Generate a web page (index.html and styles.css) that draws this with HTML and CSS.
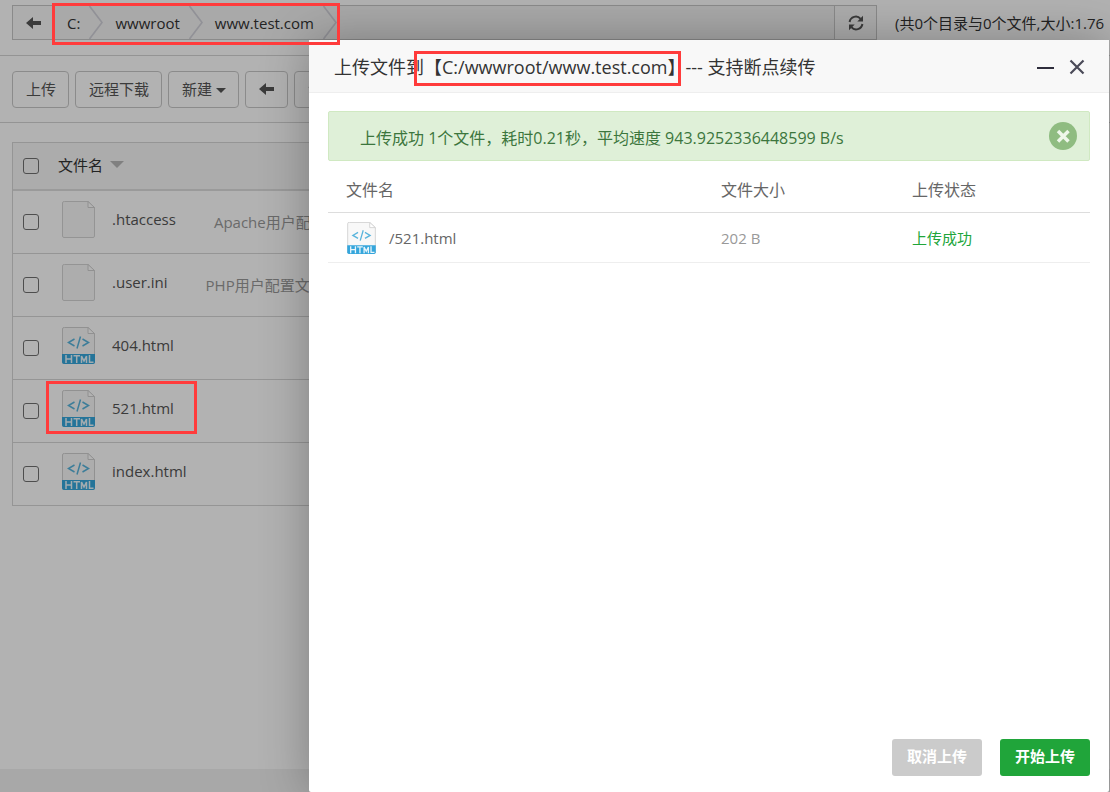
FILE: index.html
```html
<!DOCTYPE html>
<html lang="zh-CN">
<head>
<meta charset="utf-8">
<title>文件管理</title>
<link rel="stylesheet" href="styles.css">
</head>
<body>
<svg class="defs" aria-hidden="true">
  <symbol id="arrow-left" viewBox="0 0 16 12"><path d="M0 6 7 0v4h8v4H7v4z" fill="currentColor"/></symbol>
  <symbol id="refresh" viewBox="0 0 16 16"><g fill="none" stroke="currentColor" stroke-width="2"><path d="M1.600 7A6.300 6.300 0 0 1 12.600 3.800"/><path d="M14.400 9A6.300 6.300 0 0 1 3.400 12.200"/></g><path d="M15 .8V6.500H9.300zM1 15.200V9.500h5.700z" fill="currentColor"/></symbol>
  <symbol id="chevron" viewBox="0 0 14 33"><path d="M.5 0 13 16.500.5 33" fill="none" stroke="currentColor" stroke-width="1.600"/></symbol>
  <symbol id="file-blank" viewBox="0 0 33 37"><path d="M2.500.5H26l6.500 6V35a1.500 1.500 0 0 1-1.500 1.500H2A1.500 1.500 0 0 1 .5 35V2A1.500 1.500 0 0 1 2 .5z" fill="#f8f8f8" stroke="#d4d4d4"/><path d="M26 .5v6h6.500z" fill="#fff" stroke="#d0d0d0"/></symbol>
  <symbol id="file-html" viewBox="0 0 33 37"><path d="M2.500.5H26l6.500 6V35a1.500 1.500 0 0 1-1.500 1.500H2A1.500 1.500 0 0 1 .5 35V2A1.500 1.500 0 0 1 2 .5z" fill="#f8f8f8" stroke="#d0d0d0"/><path d="M26 .5v6h6.500z" fill="#fff" stroke="#d0d0d0"/><g fill="none" stroke="#58b4dc" stroke-width="1.500"><path d="m12.500 12-6 3.500 6 3.500M20.500 12l6 3.500-6 3.500M18.500 9.500l-3.500 12"/></g><path d="M0 27h33v8a2 2 0 0 1-2 2H2a2 2 0 0 1-2-2z" fill="#35a6dc"/><g fill="none" stroke="#e8f5fb" stroke-width="1.500"><path d="M4 28v8M9.500 28v8M4 32h5.500M11.500 28.700h6.500M14.700 28.700V36M19.500 36v-7l2.500 5 2.500-5v7M27.500 28v7.200h4"/></g></symbol>
</svg>

<div class="page">
  <header class="topbar">
    <nav class="path" aria-label="路径">
      <button class="path-btn path-back" aria-label="返回"><svg class="ico-arrow"><use href="#arrow-left"/></svg></button>
      <div class="crumbs">
        <a href="#">C:</a><svg class="chev"><use href="#chevron"/></svg>
        <a href="#">wwwroot</a><svg class="chev"><use href="#chevron"/></svg>
        <a href="#">www.test.com</a><svg class="chev"><use href="#chevron"/></svg>
      </div>
      <button class="path-btn path-refresh" aria-label="刷新"><svg class="ico-refresh"><use href="#refresh"/></svg></button>
    </nav>
    <div class="info">(共0个目录与0个文件,大小:1.76</div>
  </header>

  <div class="toolbar">
    <button class="tool">上传</button>
    <button class="tool">远程下载</button>
    <button class="tool">新建<span class="caret"></span></button>
    <button class="tool" aria-label="后退"><svg class="ico-arrow"><use href="#arrow-left"/></svg></button>
    <button class="tool" aria-label="刷新"><svg class="ico-refresh"><use href="#refresh"/></svg></button>
  </div>

  <main class="files">
    <table class="list">
      <thead>
        <tr><th class="tick"><input type="checkbox" aria-label="全选"></th><th><div class="col-name">文件名<span class="sort"></span></div></th></tr>
      </thead>
      <tbody>
        <tr><td class="tick"><input type="checkbox" aria-label=".htaccess"></td><td><div class="entry"><svg class="ico-file"><use href="#file-blank"/></svg><span class="name">.htaccess</span><span class="note">Apache用户配置文件(伪静态)</span></div></td></tr>
        <tr><td class="tick"><input type="checkbox" aria-label=".user.ini"></td><td><div class="entry"><svg class="ico-file"><use href="#file-blank"/></svg><span class="name">.user.ini</span><span class="note">PHP用户配置文件(防跨站)</span></div></td></tr>
        <tr><td class="tick"><input type="checkbox" aria-label="404.html"></td><td><div class="entry"><svg class="ico-file"><use href="#file-html"/></svg><span class="name">404.html</span></div></td></tr>
        <tr><td class="tick"><input type="checkbox" aria-label="521.html"></td><td><div class="entry"><svg class="ico-file"><use href="#file-html"/></svg><span class="name">521.html</span></div></td></tr>
        <tr><td class="tick"><input type="checkbox" aria-label="index.html"></td><td><div class="entry"><svg class="ico-file"><use href="#file-html"/></svg><span class="name">index.html</span></div></td></tr>
      </tbody>
    </table>
  </main>
  <footer class="footer"></footer>
</div>

<div class="shade">
  <section class="dialog" role="dialog" aria-labelledby="dlg-title">
    <header class="dlg-head">
      <h1 id="dlg-title">上传文件到【C:/wwwroot/www.test.com】--- 支持断点续传</h1>
      <button class="win" aria-label="最小化"><svg width="17" height="18" viewBox="0 0 17 18"><path d="M0 10h17" stroke="#2e2d3c" stroke-width="2"/></svg></button>
      <button class="win" aria-label="关闭"><svg width="16" height="16" viewBox="0 0 16 16"><path d="m1.500 1.500 13 13M14.500 1.500l-13 13" stroke="#4a4a58" stroke-width="2.200"/></svg></button>
    </header>
    <div class="dlg-body">
      <div class="alert">
        <span class="alert-text">上传成功 1个文件，耗时0.21秒，平均速度 943.9252336448599 B/s</span>
        <button class="dismiss" aria-label="关闭提示"><svg width="28" height="28" viewBox="0 0 28 28"><circle cx="14" cy="14" r="14" fill="#8fbc81"/><path d="m9 9 10.500 10.500M19.500 9 9 19.500" stroke="#eef7ea" stroke-width="3.500"/></svg></button>
      </div>
      <table class="uploads">
        <thead><tr><th>文件名</th><th class="size">文件大小</th><th class="state">上传状态</th></tr></thead>
        <tbody><tr><td><div class="up-entry"><svg class="ico-small"><use href="#file-html"/></svg>/521.html</div></td><td class="size">202 B</td><td class="state">上传成功</td></tr></tbody>
      </table>
    </div>
    <footer class="dlg-foot">
      <button class="btn cancel">取消上传</button>
      <button class="btn start">开始上传</button>
    </footer>
  </section>
</div>

<div class="mark mark-path"></div>
<div class="mark mark-title"></div>
<div class="mark mark-file"></div>
</body>
</html>
```
FILE: styles.css
```css
* { box-sizing: border-box; }

body {
  margin: 0;
  position: relative;
  min-height: 100vh;
  overflow: hidden;
  background: #fff;
  color: #555;
  font: 15px/20px "Open Sans", "Noto Sans CJK SC", sans-serif;
}

button {
  font: inherit;
  color: inherit;
  padding: 0;
  border: 0;
  background: none;
}

svg { display: block; flex: none; }
.defs { position: absolute; width: 0; height: 0; }
table { width: 100%; border-collapse: separate; border-spacing: 0; }
th { font-weight: 400; text-align: left; }

.page { display: flex; flex-direction: column; min-height: 100vh; }

/* path bar */
.topbar {
  display: flex;
  align-items: center;
  gap: 18px;
  height: 56px;
  padding: 5px 0 15px 12px;
  border-bottom: 1px solid #d4d4d4;
}
.path {
  display: flex;
  flex: 1;
  align-self: stretch;
  border: 1px solid #c6c6c6;
  background: #f2f2f2;
}
.path-btn {
  display: grid;
  place-items: center;
  width: 42px;
  background: #f8f8f8;
}
.path-refresh { border-left: 1px solid #c6c6c6; }
.crumbs { display: flex; flex: 1; align-items: center; gap: 9px; }
.crumbs a { color: #333; text-decoration: none; padding-left: 12px; }
.crumbs a:not(:first-child) { padding-left: 3px; }
.chev { width: 14px; height: 33px; color: #d0d0d8; }
.info { width: 215px; white-space: nowrap; color: #333; }
.ico-arrow { width: 16px; height: 12px; }
.ico-refresh { width: 16px; height: 16px; }

/* toolbar */
.toolbar {
  display: flex;
  gap: 6px;
  padding: 15px 12px 14px;
  border-bottom: 1px solid #d4d4d4;
}
.tool {
  display: flex;
  align-items: center;
  height: 37px;
  padding: 0 12px 2px 13px;
  border: 1px solid #c8c8c8;
  border-radius: 4px;
}
.caret {
  margin: 3px 0 0 4px;
  border: 5px solid transparent;
  border-top-color: currentColor;
  border-bottom: 0;
}

/* file list */
.files { flex: 1; padding: 19px 12px; }
.list { border: 1px solid #d6d6d6; border-bottom: 0; }
.list th { height: 48px; padding: 0; background: #f7f7f7; color: #333; border-bottom: 2px solid #ddd; }
.list td { height: 63px; padding: 0; border-bottom: 1px solid #d6d6d6; }
.list .tick { width: 45px; padding-left: 10px; }
.list input {
  display: block;
  appearance: none;
  width: 16px;
  height: 16px;
  margin: 0;
  border: 1px solid #707070;
  border-radius: 3px;
}
.col-name { padding-bottom: 2px; }
.sort {
  display: inline-block;
  margin-left: 7px;
  vertical-align: 3px;
  border: 7px solid transparent;
  border-top-color: #b8b8b8;
  border-bottom: 0;
}
.entry { display: flex; align-items: center; padding: 0 0 5px 4px; white-space: nowrap; }
.ico-file { width: 33px; height: 37px; }
.name { margin-left: 17px; padding-bottom: 2px; }
.note { margin-left: 38px; padding-top: 4px; color: #999; }
.footer { height: 23px; background: #f1f1f1; }

/* upload dialog */
.shade {
  position: absolute;
  inset: 0;
  display: flex;
  justify-content: flex-end;
  padding: 40px 1px 0 0;
  background: rgba(0, 0, 0, .3);
}
.dialog {
  display: flex;
  flex-direction: column;
  width: 800px;
  max-width: 100%;
  background: #fff;
  border-radius: 2px;
  box-shadow: 1px 1px 50px rgba(0, 0, 0, .3);
}
.dlg-head {
  display: flex;
  align-items: center;
  gap: 15px;
  height: 53px;
  padding: 2px 24px 0 25px;
  background: #f8f8f8;
  border-bottom: 1px solid #eee;
}
.dlg-head h1 { flex: 1; margin: 0; font-size: 18px; font-weight: 400; line-height: 24px; color: #333; }
.dlg-body { flex: 1; padding: 18px 19px; }
.alert {
  display: flex;
  align-items: center;
  justify-content: space-between;
  height: 50px;
  padding: 0 12px 0 31px;
  border: 1px solid #d0e9c2;
  border-radius: 2px;
  background: #dff0d8;
  color: #3c763d;
  font-size: 16px;
}
.alert-text { padding-top: 3px; }
.uploads th { height: 52px; padding: 6px 18px 0; border-bottom: 1px solid #ddd; font-size: 16px; color: #666; }
.uploads td { height: 50px; padding: 0 19px; border-bottom: 1px solid #eee; color: #666; }
.uploads .size { width: 191px; padding-left: 0; }
.uploads .state { width: 178px; padding-left: 0; }
.uploads td.size { color: #999; }
.uploads td.state { color: #20a53a; }
.up-entry { display: flex; align-items: center; gap: 13px; }
.ico-small { width: 29px; height: 32px; }
.dlg-foot { display: flex; justify-content: flex-end; gap: 18px; padding: 0 19px 16px; }
.btn { width: 90px; height: 37px; padding-bottom: 3px; border-radius: 3px; color: #fff; font-weight: 700; }
.cancel { background: #cbcbcb; }
.start { background: #20a53a; }

/* red highlight frames */
.mark { position: absolute; border: 3px solid #ff3b3b; pointer-events: none; }
.mark-path { left: 52px; top: 3px; width: 288px; height: 42px; }
.mark-title { left: 414px; top: 51px; width: 267px; height: 35px; }
.mark-file { left: 46px; top: 381px; width: 151px; height: 53px; }
```
